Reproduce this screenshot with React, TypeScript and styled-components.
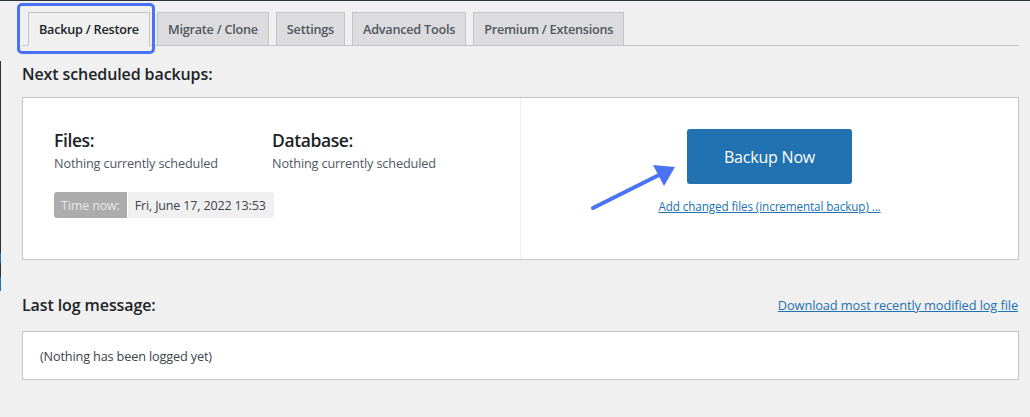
import React from "react";
import styled, { createGlobalStyle } from "styled-components";

const GlobalStyle = createGlobalStyle`
  html, body { margin: 0; padding: 0; }
  body {
    background: #f0f0f1;
    font-family: "Open Sans", "Noto Sans", Arial, sans-serif;
    color: #3c434a;
    -webkit-font-smoothing: antialiased;
  }
`;

const Page = styled.div`
  display: flex;
  min-height: 417px;
  border-top: 1px solid #2c3338;
  box-sizing: border-box;
`;

const Edge = styled.div`
  width: 1px;
  flex: none;
  background: linear-gradient(
    to bottom,
    #f0f0f1 0,
    #f0f0f1 60px,
    #2c3338 60px,
    #2c3338 252px,
    #2271b1 252px,
    #2271b1 262px,
    #2c3338 262px,
    #2c3338 276px,
    #2271b1 276px,
    #2271b1 290px,
    #f0f0f1 290px
  );
`;

const Content = styled.div`
  flex: 1;
  padding: 11px 11px 0 21px;
`;

const TabBar = styled.div`
  display: flex;
  gap: 7px;
  padding-left: 6px;
  border-bottom: 1px solid #c3c4c7;
  height: 33px;
`;

const TabWrap = styled.div`
  position: relative;
  display: flex;
`;

const Tab = styled.div<{ $active?: boolean }>`
  display: flex;
  align-items: center;
  padding: 0 10px;
  box-sizing: border-box;
  border: 1px solid #c3c4c7;
  border-bottom: ${(p) => (p.$active ? "1px solid #f0f0f1" : "none")};
  background: ${(p) => (p.$active ? "#f0f0f1" : "#dcdcde")};
  color: ${(p) => (p.$active ? "#1d2327" : "#50575e")};
  font-size: 12.7px;
  font-weight: 600;
  letter-spacing: -0.25px;
  white-space: nowrap;
  height: ${(p) => (p.$active ? "34px" : "33px")};
`;

const Highlight = styled.div`
  position: absolute;
  left: -11px;
  top: -9px;
  right: -5px;
  bottom: -9px;
  border: 3px solid #4a72f5;
  border-radius: 5px;
  pointer-events: none;
`;

const SectionTitle = styled.h2`
  margin: 0;
  font-size: 16px;
  font-weight: 600;
  color: #1d2327;
  line-height: 20px;
  letter-spacing: -0.1px;
`;

const NextTitle = styled(SectionTitle)`
  padding: 18px 0 13px;
`;

const ScheduleBox = styled.div`
  display: flex;
  background: #fff;
  border: 1px solid #c3c4c7;
  height: 163px;
  box-sizing: border-box;
`;

const LeftPane = styled.div`
  width: 498px;
  box-sizing: border-box;
  border-right: 1px solid #f0f0f1;
  padding: 30px 0 0 31px;
`;

const Columns = styled.div`
  display: flex;
`;

const Column = styled.div<{ $w?: number }>`
  width: ${(p) => (p.$w ? `${p.$w}px` : "auto")};
`;

const ColTitle = styled.h3`
  margin: 0;
  font-size: 17.5px;
  font-weight: 600;
  color: #1d2327;
  line-height: 24px;
  letter-spacing: -0.4px;
`;

const ColText = styled.div`
  font-size: 12.7px;
  color: #50575e;
  line-height: 18px;
  margin-top: 2px;
  letter-spacing: -0.15px;
`;

const TimeBadge = styled.div`
  display: inline-flex;
  margin-top: 20px;
  height: 26px;
  border-radius: 3px;
  overflow: hidden;
  font-size: 12.5px;
  letter-spacing: -0.15px;
`;

const TimeLabel = styled.span`
  display: flex;
  align-items: center;
  padding: 0 7px;
  background: #acacac;
  color: #e8e8e8;
  margin-right: 1px;
`;

const TimeValue = styled.span`
  display: flex;
  align-items: center;
  padding: 0 8px 0 7px;
  background: #f0f0f1;
  color: #3c434a;
`;

const RightPane = styled.div`
  position: relative;
  flex: 1;
  display: flex;
  flex-direction: column;
  align-items: center;
  padding-top: 31px;
`;

const BackupButton = styled.button`
  width: 165px;
  height: 55px;
  background: #2271b1;
  border: none;
  border-radius: 3px;
  color: #fff;
  font-family: inherit;
  font-size: 16px;
  letter-spacing: -0.2px;
  cursor: pointer;
`;

const SmallLink = styled.a`
  margin-top: 14px;
  font-size: 11.7px;
  color: #2271b1;
  text-decoration: underline;
  letter-spacing: -0.1px;
`;

const ArrowSvg = styled.svg`
  position: absolute;
  left: 68px;
  top: 62px;
`;

const LogHeader = styled.div`
  display: flex;
  justify-content: space-between;
  align-items: center;
  margin-top: 35px;
  margin-bottom: 16px;
`;

const LogLink = styled.a`
  font-size: 12.8px;
  color: #2271b1;
  text-decoration: underline;
  letter-spacing: -0.1px;
  margin-right: 1px;
`;

const LogBox = styled.div`
  background: #fff;
  border: 1px solid #c3c4c7;
  height: 49px;
  box-sizing: border-box;
  display: flex;
  align-items: center;
  padding-left: 17px;
  font-size: 12.7px;
  color: #3c434a;
  letter-spacing: -0.15px;
`;

const tabs = [
  "Backup / Restore",
  "Migrate / Clone",
  "Settings",
  "Advanced Tools",
  "Premium / Extensions",
];

export default function App() {
  return (
    <>
      <GlobalStyle />
      <Page>
        <Edge />
        <Content>
          <TabBar>
            {tabs.map((t, i) => (
              <TabWrap key={t}>
                <Tab $active={i === 0}>{t}</Tab>
                {i === 0 && <Highlight />}
              </TabWrap>
            ))}
          </TabBar>

          <NextTitle>Next scheduled backups:</NextTitle>

          <ScheduleBox>
            <LeftPane>
              <Columns>
                <Column $w={218}>
                  <ColTitle>Files:</ColTitle>
                  <ColText>Nothing currently scheduled</ColText>
                </Column>
                <Column>
                  <ColTitle>Database:</ColTitle>
                  <ColText>Nothing currently scheduled</ColText>
                </Column>
              </Columns>
              <TimeBadge>
                <TimeLabel>Time now:</TimeLabel>
                <TimeValue>Fri, June 17, 2022 13:53</TimeValue>
              </TimeBadge>
            </LeftPane>
            <RightPane>
              <BackupButton>Backup Now</BackupButton>
              <SmallLink href="#">Add changed files (incremental backup) ...</SmallLink>
              <ArrowSvg width="90" height="56" viewBox="0 0 90 56">
                <line
                  x1="4"
                  y1="48"
                  x2="72"
                  y2="14"
                  stroke="#4a72f5"
                  strokeWidth="4"
                  strokeLinecap="round"
                />
                <polygon points="86,7 64,5 75,26" fill="#4a72f5" />
              </ArrowSvg>
            </RightPane>
          </ScheduleBox>

          <LogHeader>
            <SectionTitle>Last log message:</SectionTitle>
            <LogLink href="#">Download most recently modified log file</LogLink>
          </LogHeader>

          <LogBox>(Nothing has been logged yet)</LogBox>
        </Content>
      </Page>
    </>
  );
}
